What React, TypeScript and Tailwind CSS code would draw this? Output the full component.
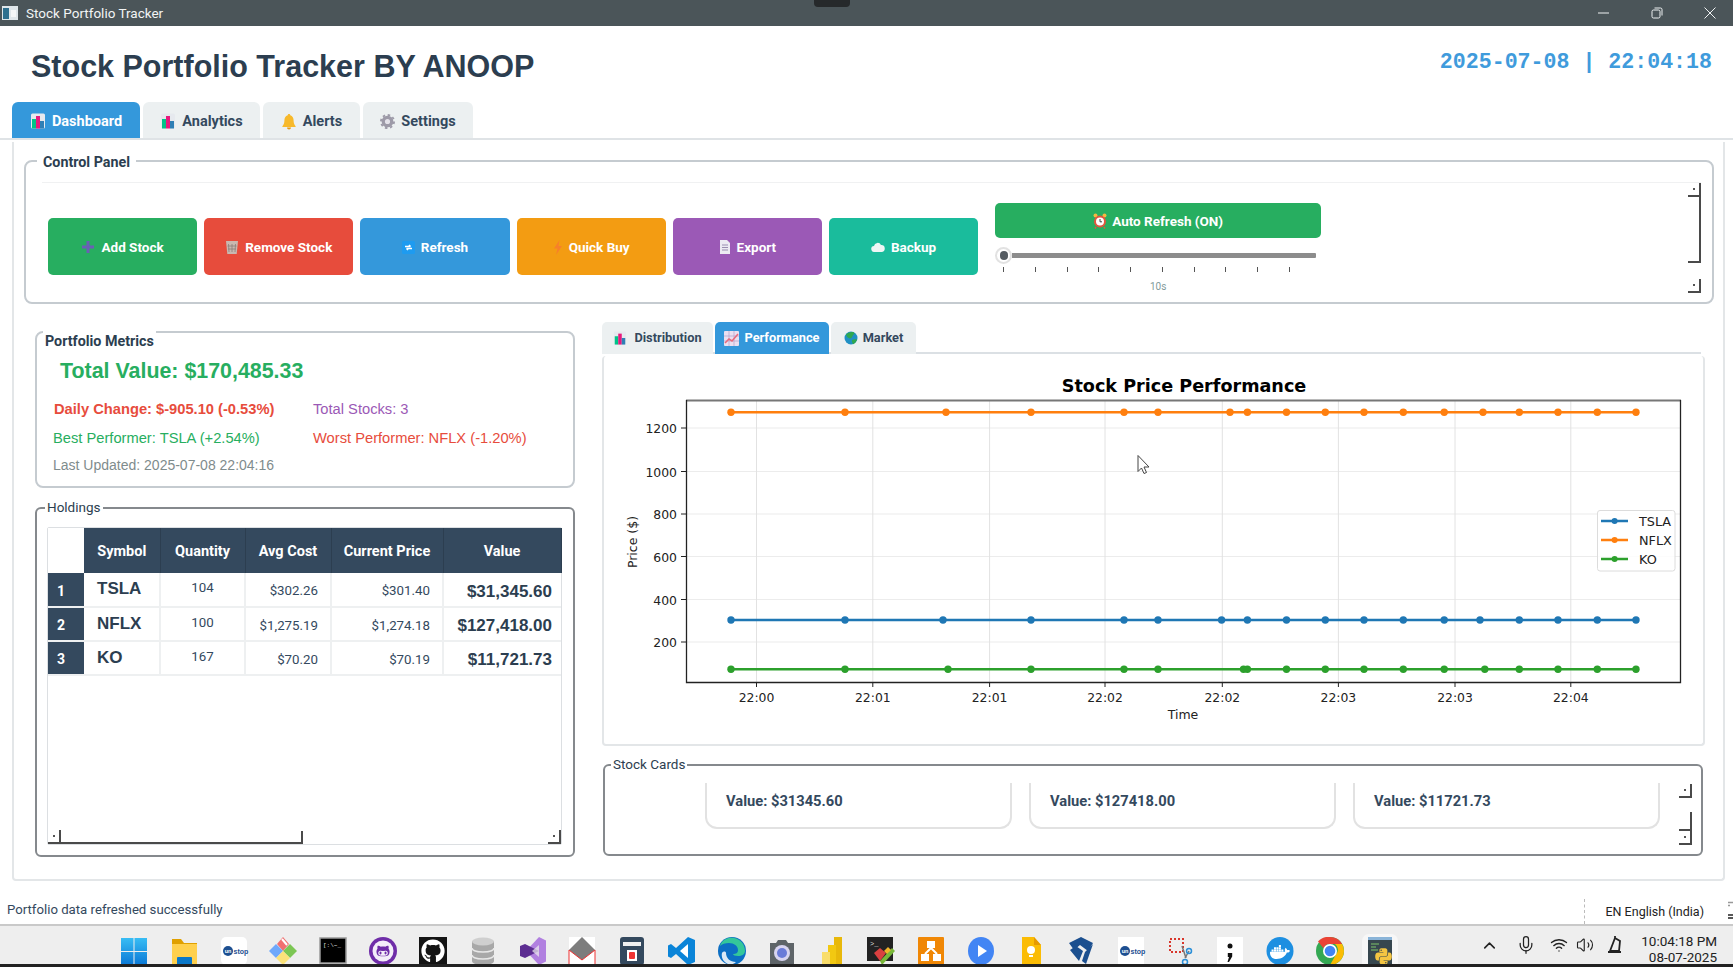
import React from "react";
import { FaGithub, FaGithubAlt, FaDocker, FaPython } from "react-icons/fa";
import { ChevronUp, Mic, Wifi, Volume2 } from "lucide-react";

const BarsIcon = ({ s = 16 }: { s?: number }) => (
  <svg width={s} height={s} viewBox="0 0 16 16" className="shrink-0">
    <rect x="1" y="0.5" width="14" height="15" rx="1.5" fill="#e6e9ee" />
    <rect x="2" y="6" width="4" height="9.5" fill="#00c389" />
    <rect x="6" y="3" width="4" height="12.5" fill="#e8197d" />
    <rect x="10" y="8" width="4" height="7.5" fill="#2f7fb5" />
  </svg>
);
const BellIcon = () => (
  <svg width="16" height="17" viewBox="0 0 16 17" className="shrink-0">
    <path d="M8 1c.8 0 1.2.5 1.3 1.2C11.6 3 12.6 5 12.6 7.5c0 2.6.7 4.3 2 5.7v.8H1.4v-.8c1.300-1.400 2-3.100 2-5.700C3.400 5 4.400 3 6.700 2.200 6.800 1.500 7.200 1 8 1z" fill="#f7b92b" />
    <path d="M6 14.500h4c0 1.200-.9 2-2 2s-2-.8-2-2z" fill="#e79a12" />
  </svg>
);
const GearIcon = () => (
  <svg width="15" height="15" viewBox="0 0 16 16" className="shrink-0">
    <circle cx="8" cy="8" r="4.500" fill="#e4e2ea" stroke="#9d9aa8" strokeWidth="3.500" />
    <circle cx="8" cy="8" r="7" fill="none" stroke="#9d9aa8" strokeWidth="2" strokeDasharray="2.700 2.800" />
  </svg>
);
const PlusIcon = () => (
  <svg width="14" height="14" viewBox="0 0 14 14" className="shrink-0">
    <path d="M7 1v12M1 7h12" stroke="#6a5fb5" strokeWidth="3" />
  </svg>
);
const TrashIcon = () => (
  <svg width="14" height="15" viewBox="0 0 14 15" className="shrink-0">
    <path d="M1 1h12l-1.300 13H2.300z" fill="#c9b8b0" />
    <path d="M3.500 4l.5 8M7 4v8M10.500 4l-.5 8M2.500 6h9M3 9h8" stroke="#8c7f7a" strokeWidth="0.8" />
  </svg>
);
const RefreshIcon = () => (
  <svg width="13" height="13" viewBox="0 0 13 13" className="shrink-0">
    <rect width="13" height="13" rx="1.500" fill="#1e9bf0" />
    <path d="M3 5.500h5.500M8.500 5.500L7 4M10 7.500H4.500M4.500 7.500L6 9" stroke="#fff" strokeWidth="1.500" fill="none" />
  </svg>
);
const BoltIcon = () => (
  <svg width="10" height="15" viewBox="0 0 10 15" className="shrink-0">
    <path d="M6.500 0L1 8.500h3.500L3 15l6-9H5.500z" fill="#f7802a" />
  </svg>
);
const PageIcon = () => (
  <svg width="12" height="14" viewBox="0 0 12 14" className="shrink-0">
    <path d="M1 0h7l3 3v11H1z" fill="#eceaf2" />
    <path d="M3 5h6M3 7.500h6M3 10h6" stroke="#9a8fb0" strokeWidth="1" />
  </svg>
);
const CloudIcon = () => (
  <svg width="14" height="10" viewBox="0 0 14 10" className="shrink-0">
    <path d="M3.500 10A3 3 0 0 1 3 4 3.700 3.700 0 0 1 10 3a3.500 3.500 0 0 1 .5 7z" fill="#eef6f5" />
  </svg>
);
const AlarmIcon = () => (
  <svg width="14" height="16" viewBox="0 0 14 16" className="shrink-0">
    <circle cx="2.500" cy="2.500" r="2" fill="#f5b740" />
    <circle cx="11.500" cy="2.500" r="2" fill="#f5b740" />
    <circle cx="7" cy="8.500" r="6" fill="#e2563f" />
    <circle cx="7" cy="8.500" r="4" fill="#fff" />
    <path d="M7 6v2.800h2" stroke="#444" strokeWidth="1" fill="none" />
    <path d="M3 14l-1 1.500M11 14l1 1.500" stroke="#e2563f" strokeWidth="1.500" />
  </svg>
);
const ChartUpIcon = () => (
  <svg width="15" height="15" viewBox="0 0 15 15" className="shrink-0">
    <rect width="15" height="15" rx="1" fill="#eadff0" />
    <path d="M0 5h15M0 10h15M5 0v15M10 0v15" stroke="#b9a7cf" strokeWidth="0.8" />
    <path d="M1 12l4-4 3 2 6-7" stroke="#e86a7c" strokeWidth="1.600" fill="none" />
  </svg>
);
const GlobeIcon = () => (
  <svg width="14" height="14" viewBox="0 0 14 14" className="shrink-0">
    <circle cx="7" cy="7" r="6.500" fill="#1f8fc4" />
    <path d="M2 3.500C4 1.500 8 .5 10 1.500c1 .8 0 2-1 2.500-.7 1.500-1 3-3 3.500C4 7 2.500 6 2 3.500zM8 9c1.500-1 3.500-1 5-.5-.5 2-2 4-4 4.700C8.500 12 7.500 10.500 8 9z" fill="#2fa84f" />
  </svg>
);

const GroupTitle = ({ children, cls }: { children: React.ReactNode; cls: string }) => (
  <div className={`absolute bg-white leading-[18px] text-[#2c3e50] ${cls}`}>{children}</div>
);

const ScrollBtn = ({ dir = "v" }: { dir?: string }) => (
  <div className={`flex items-center justify-center shrink-0 w-[13px] border-[#4a4a4a] ${dir === "l" ? "h-[12px] border-l-0 border-r-2 border-b-2" : "h-[14px] border-r-2 border-b-2"}`}>
    <div className="w-[2px] h-[2px] bg-[#555]" />
  </div>
);

const Btn = ({ color, icon, label }: { color: string; icon: React.ReactNode; label: string }) => (
  <div className={`w-[149.2px] h-[57px] rounded-[5px] flex items-center justify-center gap-[6px] text-white font-bold text-[13.500px] pt-px font-['Roboto',sans-serif] ${color}`}>
    {icon}
    <span>{label}</span>
  </div>
);

const rows = [
  ["1", "TSLA", "104", "$302.26", "$301.40", "$31,345.60"],
  ["2", "NFLX", "100", "$1,275.19", "$1,274.18", "$127,418.00"],
  ["3", "KO", "167", "$70.20", "$70.19", "$11,721.73"],
];

const common = [1247.4, 1286.5, 1325.3, 1364, 1403.3, 1444.2];
const tail = [1519.3, 1558, 1597.3, 1636];
const series = [
  { name: "NFLX", color: "#ff7f0e", y: 412.3, xs: [731, 845, 946, 1031, 1124, 1158, 1230, ...common, 1483, ...tail] },
  { name: "TSLA", color: "#1f77b4", y: 620, xs: [731, 845, 943, 1031, 1124, 1158, 1221.6, ...common, 1480, ...tail] },
  { name: "KO", color: "#2ca02c", y: 669.3, xs: [731, 845, 948, 1031, 1124, 1158, 1243.5, ...common, 1484.8, ...tail] },
];
const yTicks: [string, number][] = [["1200", 428], ["1000", 471.5], ["800", 514], ["600", 556.5], ["400", 599.5], ["200", 642]];
const xTicks: [string, number][] = [["22:00", 756.5], ["22:01", 872.8], ["22:01", 989.6], ["22:02", 1105], ["22:02", 1222.3], ["22:03", 1338.4], ["22:03", 1455], ["22:04", 1570.8]];

const Chart = () => (
  <svg width="1099" height="388" viewBox="604 356 1099 388" className="block font-['DejaVu_Sans',sans-serif]">
    <text x="1184" y="392" textAnchor="middle" fontSize="17.600" fontWeight="700" fill="#000">Stock Price Performance</text>
    {yTicks.map(([l, y]) => (
      <g key={l}>
        <line x1="686" x2="1681" y1={y} y2={y} stroke="#ececec" strokeWidth="1.200" />
        <line x1="681" x2="686" y1={y} y2={y} stroke="#222" />
        <text x="677" y={y + 5} textAnchor="end" fontSize="12.400" fill="#222">{l}</text>
      </g>
    ))}
    {xTicks.map(([l, x], i) => (
      <g key={i}>
        <line x1={x} x2={x} y1="400" y2="682" stroke="#e2e2e2" />
        <line x1={x} x2={x} y1="682" y2="687" stroke="#222" />
        <text x={x} y="702" textAnchor="middle" fontSize="12.400" fill="#222">{l}</text>
      </g>
    ))}
    {series.map((s) => (
      <g key={s.name}>
        <line x1="731" x2="1636" y1={s.y} y2={s.y} stroke={s.color} strokeWidth="2.600" />
        {s.xs.map((x, i) => <circle key={i} cx={x} cy={s.y} r="3.700" fill={s.color} />)}
      </g>
    ))}
    <path d="M686 400.500H1681" stroke="#777" strokeWidth="2" />
    <path d="M686.500 400V682.500H1680.500V400" stroke="#222" strokeWidth="1.300" fill="none" />
    <rect x="1597.500" y="510.500" width="77.500" height="60.500" rx="2.500" fill="#fff" fillOpacity="0.85" stroke="#dcdcdc" />
    {[["TSLA", "#1f77b4", 521], ["NFLX", "#ff7f0e", 540], ["KO", "#2ca02c", 559]].map(([n, c, y]) => (
      <g key={n as string}>
        <line x1="1601" x2="1628" y1={y as number} y2={y as number} stroke={c as string} strokeWidth="2.600" />
        <circle cx="1614.600" cy={y as number} r="3" fill={c as string} />
        <text x="1639" y={(y as number) + 4.500} fontSize="12.800" fill="#222">{n as string}</text>
      </g>
    ))}
    <text x="1183" y="719" textAnchor="middle" fontSize="12.500" fill="#222">Time</text>
    <text transform="translate(637 542) rotate(-90)" textAnchor="middle" fontSize="12.500" fill="#222">Price ($)</text>
    <path d="M1138 455.500v16l3.500-3.500 2.500 5.500 2.500-1-2.500-5.500h5z" fill="#fff" stroke="#444" strokeWidth="1" />
  </svg>
);

const T = ({ children }: { children: React.ReactNode }) => (
  <svg width="30" height="28" viewBox="0 0 30 28" className="block shrink-0">{children}</svg>
);

const UnstopMark = () => (
  <g>
    <circle cx="9" cy="14" r="5" fill="#1d4f91" />
    <text x="9" y="16" textAnchor="middle" fontSize="5.500" fontWeight="700" fill="#fff" fontFamily="Liberation Sans">un</text>
    <text x="14.500" y="16.500" fontSize="7" fontWeight="700" fill="#1d4f91" fontFamily="Liberation Sans">stop</text>
  </g>
);

const taskIcons: React.ReactNode[] = [
  <T><defs><linearGradient id="w" x1="0" y1="0" x2="0" y2="1"><stop offset="0" stopColor="#38bdf4" /><stop offset="1" stopColor="#0a78d6" /></linearGradient></defs><path d="M2 1h12.500v13H2zM15.500 1H28v13H15.500zM2 15h12.500v13H2zM15.500 15H28v13H15.500z" fill="url(#w)" /></T>,
  <T><path d="M3 2h9l3 4h13v22H3z" fill="#e0a000" /><path d="M3 7h25v21H3z" fill="#ffd04d" /><rect x="8" y="20" width="15" height="8" rx="1" fill="#0a78c9" /></T>,
  <T><rect x="2" width="26" height="28" rx="5" fill="#fff" /><UnstopMark /></T>,
  <T><path d="M15 0l6 7-6 7-6-7z" fill="#f07070" /><path d="M8 7l7 7-7 7-7-7z" fill="#6fa8fb" /><path d="M22 7l7 7-7 7-7-7z" fill="#7cc654" /><path d="M15 14l7 7-7 7-7-7z" fill="#fbe27a" /><path d="M14 2l5 6" stroke="#fff" strokeWidth="2" /></T>,
  <T><rect x="2" y="1" width="26" height="25" fill="#000" stroke="#999" strokeWidth="1.500" /><text x="5" y="10" fontSize="6" fill="#ddd" fontFamily="Liberation Mono">[:\~_</text></T>,
  <T><circle cx="15" cy="14" r="14" fill="#6f2da8" /><circle cx="15" cy="14" r="10.500" fill="#f4eef9" /><FaGithubAlt x="8" y="7" size="14" color="#6f2da8" /></T>,
  <T><rect x="1" width="28" height="28" fill="#141414" /><FaGithub x="3" y="2" size="24" color="#fff" /></T>,
  <T><path d="M4 4v20c0 2.500 5 4 11 4s11-1.500 11-4V4z" fill="#a8a8a8" /><ellipse cx="15" cy="4.500" rx="11" ry="4" fill="#cfcfcf" /><path d="M4 11c0 2.500 5 4 11 4s11-1.500 11-4M4 18c0 2.500 5 4 11 4s11-1.500 11-4" stroke="#e8e8e8" strokeWidth="1.500" fill="none" /></T>,
  <T><path d="M21 0l7 3.500v21L21 28 8 14z" fill="#b180e0" /><path d="M2 9l5-2 14 7v0L7 21l-5-2z" fill="#5c2d91" /><path d="M21 8v12l-7-6z" fill="#eee" opacity="0.700" /></T>,
  <T><rect x="2" width="26" height="28" fill="#fff" /><path d="M2 13L15 0l13 13-13 10z" fill="#7d7d7d" /><path d="M2 13l13 10 13-10M2 13v15M28 13v15" stroke="#e33" strokeWidth="1" fill="none" /></T>,
  <T><rect x="3" width="24" height="28" rx="3" fill="#34495e" /><rect x="6" y="5" width="18" height="4" fill="#f0f0f0" /><rect x="10" y="13" width="10" height="11" fill="#fff" /><rect x="12" y="15" width="6" height="7" rx="1" fill="#e33" /></T>,
  <T><path d="M21 0l7 3v22l-7 3L9 17l-5 4-3-1.500V8.500L4 7l5 4z" fill="#0a84d8" /><path d="M21 7v14l-8-7z" fill="#fff" /></T>,
  <T><circle cx="15" cy="14" r="14" fill="#0c6fc4" /><path d="M3 9c2-7 9-9 14-8 6 1 11 6 11 13 0 3-3 5-7 5-3 0-5-1-5-2 3 0 5-1 5-4 0-4-4-7-9-7-4 0-7 1-9 3z" fill="#34c79a" /><path d="M9 16c0 5 4 9 10 9-2 2-5 3-8 2-5-2-7-7-6-11 1-2 4-2 4 0z" fill="#fff" opacity="0.850" /></T>,
  <T><path d="M3 6h6l2-3h8l2 3h6v22H3z" fill="#5e6468" /><circle cx="15" cy="16" r="8" fill="#d8d4f0" /><circle cx="15" cy="16" r="5" fill="#6a7bd8" /></T>,
  <T><rect x="17" y="0" width="8" height="28" fill="#e8b80a" /><rect x="11" y="8" width="8" height="20" fill="#f2c811" /><rect x="5" y="15" width="8" height="13" fill="#f9dd6b" /></T>,
  <T><rect x="1" y="0" width="26" height="24" fill="#222" /><text x="4" y="9" fontSize="7" fill="#ddd" fontFamily="Liberation Mono">&gt;_</text><path d="M8 16l6 8 6-8-6-5z" fill="#d94040" /><path d="M14 24l12-13 3 3-13 14z" fill="#79b83a" /><path d="M18 14l4-4 3 3-4 4z" fill="#f0b429" /></T>,
  <T><rect x="2" width="26" height="28" rx="1" fill="#f08705" /><path d="M11 4h8v7h-8zM5 17h8v7H5zM17 17h8v7h-8z" fill="#fff" /><path d="M15 11l-6 6M15 11l6 6" stroke="#fff" strokeWidth="2" /></T>,
  <T><ellipse cx="15" cy="14" rx="13" ry="14" fill="#4285f4" /><path d="M12 8l9 6-9 6z" fill="#fff" /></T>,
  <T><path d="M6 0h12l7 8v20H6z" fill="#fbbc04" /><path d="M18 0v8h7z" fill="#e69a00" /><circle cx="15" cy="13" r="4" fill="#fff" /><rect x="13" y="18" width="4" height="2" fill="#fff" /></T>,
  <T><path d="M3 6L15 0l12 6-5 8-8-6-6 5zM4 13l6-4 7 5-4 10z" fill="#1b4f8f" /><path d="M19 15l8-8-7 20-4-3z" fill="#1b4f8f" /></T>,
  <T><rect x="2" width="26" height="28" fill="#fff" /><UnstopMark /></T>,
  <T><rect x="5" y="2" width="13" height="13" fill="none" stroke="#d9362b" strokeWidth="2" strokeDasharray="2 2" /><path d="M17 9l4 12" stroke="#777" strokeWidth="1.500" /><path d="M24 14l-4 7" stroke="#777" strokeWidth="1.500" /><circle cx="24" cy="14" r="2.500" fill="none" stroke="#2a8fd8" strokeWidth="1.500" /><circle cx="20" cy="25" r="2.500" fill="none" stroke="#2a8fd8" strokeWidth="1.500" /></T>,
  <T><rect x="2" width="26" height="28" fill="#fff" /><circle cx="15" cy="9" r="2.500" fill="#111" /><path d="M12.800 16h4.400v3.500L14 25h-1.500l1.500-5h-1.200z" fill="#111" /></T>,
  <T><ellipse cx="15" cy="14" rx="13.500" ry="14" fill="#1d8fe1" /><FaDocker x="5" y="5" size="20" color="#fff" /></T>,
  <T><circle cx="15" cy="14" r="14" fill="#34a853" /><path d="M15 0a14 14 0 0 1 12.100 7H15a7 7 0 0 0-6.500 4.300L3 4.500A14 14 0 0 1 15 0z" fill="#ea4335" /><path d="M27.100 7A14 14 0 0 1 15 28l6-10.500A7 7 0 0 0 20 7z" fill="#fbbc04" /><circle cx="15" cy="14" r="7" fill="#fff" /><circle cx="15" cy="14" r="5.300" fill="#4285f4" /></T>,
  <T><rect x="3" y="0" width="24" height="28" fill="#37474f" /><rect x="3" y="0" width="24" height="3" fill="#8ab4d8" /><path d="M6 7h8M6 10h5M6 13h7" stroke="#7fc66a" strokeWidth="1.200" /><FaPython x="9" y="10" size="19" color="#f4c542" /></T>,
];

export default function App() {
  return (
    <div className="w-[1733px] h-[967px] overflow-hidden flex flex-col bg-white font-['Liberation_Sans',sans-serif]">
      {/* Title bar */}
      <div className="h-[26px] shrink-0 bg-[#4b5559] flex items-center text-[#f2f4f4] text-[13.500px] font-['Roboto',sans-serif]">
        <svg width="16" height="14" viewBox="0 0 16 14" className="ml-[2px] mr-[8px]">
          <rect width="16" height="14" fill="#dfe6ea" />
          <rect x="1" y="2" width="6" height="11" fill="#2e6f8e" />
          <rect x="9" y="4" width="5" height="7" fill="#f4f6f7" />
        </svg>
        <span>Stock Portfolio Tracker</span>
        <div className="flex-1 flex justify-center self-start">
          <div className="w-[36px] h-[7px] bg-[#26292b] rounded-b-[4px] ml-[-98px]" />
        </div>
        <div className="flex items-center text-[#eef1f2]">
          <svg width="12" height="12" viewBox="0 0 12 12" className="mr-[41px]"><path d="M0 6h11" stroke="currentColor" strokeWidth="1" /></svg>
          <svg width="12" height="12" viewBox="0 0 12 12" className="mr-[41px]"><rect x="1" y="3" width="8" height="8" rx="1.500" fill="none" stroke="currentColor" /><path d="M3.500 1H9.500A1.500 1.500 0 0 1 11 2.500V8.500" fill="none" stroke="currentColor" /></svg>
          <svg width="12" height="12" viewBox="0 0 12 12" className="mr-[17px]"><path d="M0.500 0.500l11 11M11.500 0.500l-11 11" stroke="currentColor" strokeWidth="1" /></svg>
        </div>
      </div>

      {/* Header */}
      <div className="h-[76px] shrink-0 flex items-center justify-between pl-[31px] pr-[21px]">
        <h1 className="text-[30.500px] font-bold text-[#2c3e50] leading-none mt-[4px]">Stock Portfolio Tracker BY ANOOP</h1>
        <div className="text-[21.600px] font-bold text-[#3f9bdc] font-['Liberation_Mono',monospace] mt-[-3px]">2025-07-08 | 22:04:18</div>
      </div>

      {/* Tabs */}
      <div className="h-[38px] shrink-0 flex gap-[3px] pl-[12px] border-b-2 border-[#dfe3e6] items-start text-[14.500px] font-bold font-['Roboto',sans-serif]">
        <div className="w-[128px] h-[36px] rounded-t-[6px] bg-[#3498db] text-white flex items-center justify-center gap-[6px] pt-[2px]"><BarsIcon /><span className="pt-[2px]">Dashboard</span></div>
        <div className="w-[117px] h-[36px] rounded-t-[6px] bg-[#ecf0f1] text-[#34495e] flex items-center justify-center gap-[6px] pt-[2px]"><BarsIcon /><span className="pt-[2px]">Analytics</span></div>
        <div className="w-[97px] h-[36px] rounded-t-[6px] bg-[#ecf0f1] text-[#34495e] flex items-center justify-center gap-[6px] pt-[2px]"><BellIcon /><span className="pt-[2px]">Alerts</span></div>
        <div className="w-[110px] h-[36px] rounded-t-[6px] bg-[#ecf0f1] text-[#34495e] flex items-center justify-center gap-[6px] pt-[2px]"><GearIcon /><span className="pt-[2px]">Settings</span></div>
      </div>

      {/* Main pane */}
      <div className="h-[739px] shrink-0 ml-[12px] mr-[8px] mt-[2px] border-l-2 border-r-2 border-b-2 border-[#e3e6e8] rounded-b-[4px] overflow-hidden">
        {/* Control panel */}
        <div className="relative ml-[10px] mr-[9px] mt-[18px] h-[144px] border-2 border-[#c5cbd0] rounded-[8px]">
          <GroupTitle cls="left-[11px] top-[-9px] px-[6px] text-[14.300px] font-bold font-['Roboto',sans-serif]">Control Panel</GroupTitle>
          <div className="ml-[16px] mr-[11px] mt-[20px] h-[111px] border-t border-[#f0f1f2] flex">
            <div className="flex-1 flex items-start pl-[6px] pt-[20px]">
              <div className="flex gap-[7px] mt-[15px]">
                <Btn color="bg-[#27ae60]" icon={<PlusIcon />} label="Add Stock" />
                <Btn color="bg-[#e74c3c]" icon={<TrashIcon />} label="Remove Stock" />
                <Btn color="bg-[#3498db]" icon={<RefreshIcon />} label="Refresh" />
                <Btn color="bg-[#f39c12]" icon={<BoltIcon />} label="Quick Buy" />
                <Btn color="bg-[#9b59b6]" icon={<PageIcon />} label="Export" />
                <Btn color="bg-[#1abc9c]" icon={<CloudIcon />} label="Backup" />
              </div>
              <div className="w-[326px] ml-[17px] flex flex-col">
                <div className="h-[35px] rounded-[5px] bg-[#27ae60] text-white font-bold text-[13.500px] pt-px font-['Roboto',sans-serif] flex items-center justify-center gap-[5px]"><AlarmIcon />Auto Refresh (ON)</div>
                <div className="mt-[8px] h-[18px] flex items-center">
                  <div className="w-[17px] h-[17px] rounded-full bg-white border-2 border-[#e2e2e2] flex items-center justify-center shrink-0">
                    <div className="w-[8px] h-[9px] rounded-full bg-[#555c62]" />
                  </div>
                  <div className="flex-1 h-[5px] bg-[#8c8c8c] mr-[5px] rounded-r-[1px]" />
                </div>
                <div className="flex justify-between w-[287px] ml-[8px] mt-[2px] h-[6px] items-end">
                  {Array.from({ length: 10 }).map((_, i) => <div key={i} className="w-px h-[5px] bg-[#555]" />)}
                </div>
                <div className="text-center text-[10px] text-[#7f9a9a] mt-[9px] leading-[12px] font-['Roboto',sans-serif]">10s</div>
              </div>
            </div>
            <div className="w-[13px] flex flex-col shrink-0">
              <ScrollBtn />
              <div className="h-[66px] border-r-2 border-b-2 border-[#4a4a4a] shrink-0" />
              <div className="flex-1" />
              <ScrollBtn />
            </div>
          </div>
        </div>

        {/* Content row */}
        <div className="flex ml-[21px] mt-[18px] items-start">
          <div className="w-[540px] pt-[9px] flex flex-col gap-[19px] shrink-0">
            {/* Metrics */}
            <div className="relative h-[157px] border-2 border-[#c5cbd0] rounded-[8px]">
              <GroupTitle cls="left-[6px] top-[-2px] pl-[2px] pr-[2px] text-[14.300px] font-bold font-['Roboto',sans-serif] py-[1px]">Portfolio Metrics</GroupTitle>
              <div className="pl-[23px] mt-[23px] h-[30px] leading-[30px] text-[21.400px] font-bold text-[#27ae60]">Total Value: $170,485.33</div>
              <div className="grid grid-cols-[260px_1fr] pl-[16px] mt-[11px] text-[14.700px] leading-[24px] gap-y-[5px]">
                <div className="font-bold text-[#e74c3c] pl-px">Daily Change: $-905.10 (-0.53%)</div>
                <div className="text-[#9b59b6]">Total Stocks: 3</div>
                <div className="text-[#27ae60]">Best Performer: TSLA (+2.54%)</div>
                <div className="text-[#e74c3c]">Worst Performer: NFLX (-1.20%)</div>
              </div>
              <div className="pl-[16px] mt-[4px] h-[22px] leading-[22px] text-[14px] text-[#7f8c8d]">Last Updated: 2025-07-08 22:04:16</div>
            </div>

            {/* Holdings */}
            <div className="relative h-[350px] border-2 border-[#85898d] rounded-[6px]">
              <GroupTitle cls="left-[8px] top-[-11px] px-[2px] text-[13.500px] font-['Roboto',sans-serif]">Holdings</GroupTitle>
              <div className="ml-[10px] mt-[18px] w-[515px] h-[318px] border border-[#dcdfe2] rounded-[2px] flex flex-col justify-between font-['Roboto',sans-serif]">
                <table className="table-fixed w-[513px] border-collapse text-[#34495e]">
                  <colgroup>
                    <col className="w-[36px]" /><col className="w-[76px]" /><col className="w-[85px]" /><col className="w-[86px]" /><col className="w-[112px]" /><col className="w-[118px]" />
                  </colgroup>
                  <thead>
                    <tr className="h-[45px] text-white text-[14.500px] font-bold">
                      <th className="bg-white" />
                      {["Symbol", "Quantity", "Avg Cost", "Current Price", "Value"].map((h) => (
                        <th key={h} className="bg-[#34495e] border-r border-[#2c3e50] font-bold pt-[3px]">{h}</th>
                      ))}
                    </tr>
                  </thead>
                  <tbody>
                    {rows.map((r) => (
                      <tr key={r[0]} className="h-[34px] border-b-2 border-[#eef0f1]">
                        <td className="bg-[#34495e] text-white text-[14px] font-bold pl-[9px] pt-[3px]">{r[0]}</td>
                        <td className="pl-[13px] pb-[1px] text-[17px] font-bold text-[#2c3e50] border-r-2 border-[#eef0f1] font-['Liberation_Sans',sans-serif]">{r[1]}</td>
                        <td className="text-center pb-[3px] text-[13.300px] border-r-2 border-[#eef0f1]">{r[2]}</td>
                        <td className="text-right pr-[12px] pt-[3px] text-[13.300px] border-r-2 border-[#eef0f1]">{r[3]}</td>
                        <td className="text-right pr-[12px] pt-[3px] text-[13.300px] border-r-2 border-[#eef0f1]">{r[4]}</td>
                        <td className="text-right pr-[9px] pt-[4px] text-[17px] font-bold text-[#2c3e50] font-['Liberation_Sans',sans-serif]">{r[5]}</td>
                      </tr>
                    ))}
                  </tbody>
                </table>
                <div className="flex justify-between items-end h-[13px]">
                  <div className="flex items-end">
                    <ScrollBtn />
                    <div className="w-[242px] h-[13px] border-r-2 border-b-2 border-[#4a4a4a]" />
                  </div>
                  <ScrollBtn />
                </div>
              </div>
            </div>
          </div>

          {/* Right column */}
          <div className="w-[1103px] ml-[27px] shrink-0 flex flex-col">
            <div className="h-[32px] flex gap-[2px] items-start border-b-2 border-[#dbe0e4] text-[12.800px] font-bold font-['Roboto',sans-serif] mr-[4px]">
              <div className="w-[111px] h-[32px] bg-[#ecf0f1] rounded-t-[5px] text-[#34495e] flex items-center justify-center gap-[7px]"><BarsIcon s={14} />Distribution</div>
              <div className="w-[114px] h-[32px] bg-[#3498db] rounded-t-[5px] text-white flex items-center justify-center gap-[5px]"><ChartUpIcon />Performance</div>
              <div className="w-[85px] h-[32px] bg-[#ecf0f1] rounded-t-[5px] text-[#34495e] flex items-center justify-center gap-[5px]"><GlobeIcon />Market</div>
            </div>
            <div className="mt-[2px] h-[390px] border-l-2 border-r-2 border-b-2 border-[#e3e6e8] rounded-[4px] overflow-hidden">
              <Chart />
            </div>
            {/* Stock cards */}
            <div className="relative ml-[1px] w-[1100px] h-[92px] mt-[18px] border-2 border-[#85898d] rounded-[6px] flex">
              <GroupTitle cls="left-[6px] top-[-11px] px-[2px] text-[13.500px] font-['Roboto',sans-serif]">Stock Cards</GroupTitle>
              <div className="flex-1 flex gap-[17px] pl-[100px] pt-[17px] items-start">
                {["Value: $31345.60", "Value: $127418.00", "Value: $11721.73"].map((v) => (
                  <div key={v} className="w-[307px] h-[46px] border-2 border-t-0 border-[#e2e2e2] rounded-b-[12px] pl-[19px] pt-[8px] text-[14.700px] leading-[20px] font-bold text-[#34495e] font-['Roboto',sans-serif]">{v}</div>
                ))}
              </div>
              <div className="w-[13px] mr-[9px] flex flex-col shrink-0 pt-[18px]">
                <ScrollBtn />
                <div className="h-[19px] mt-[14px] border-r-2 border-b-2 border-[#4a4a4a]" />
                <ScrollBtn />
              </div>
            </div>
          </div>
        </div>
      </div>

      {/* Status bar */}
      <div className="h-[43px] shrink-0 flex items-center justify-between pl-[7px] font-['Roboto',sans-serif]">
        <span className="text-[13.200px] text-[#34495e] pt-[14px]">Portfolio data refreshed successfully</span>
        <div className="flex items-end self-stretch">
          <div className="h-[25px] border-l border-dashed border-[#bbb] mr-[21px]" />
          <span className="text-[12.500px] text-[#222] leading-[24px] mr-[24px]">EN English (India)</span>
          <svg width="5" height="20" viewBox="0 0 5 20" className="mb-[4px]">
            <path d="M0 2.500h5M0 5.500h2" stroke="#999" strokeWidth="1.500" />
            <path d="M0 15h5M0 18h5" stroke="#222" strokeWidth="1.500" />
          </svg>
        </div>
      </div>

      {/* Taskbar */}
      <div className="flex-1 bg-[#eeeeee] border-t-2 border-[#c9c9c9] border-b-[3px] border-b-[#222] flex items-end justify-between overflow-hidden">
        <div className="flex items-end ml-[119px] gap-[19.830px]">
          {taskIcons.map((ic, i) => (
            <div key={i} className={`h-[27px] ${i === taskIcons.length - 1 ? "bg-[#f7f7f7] rounded-t-[4px] shadow-[0_0_0_3px_#f7f7f7]" : ""}`}>{ic}</div>
          ))}
        </div>
        <div className="flex items-center mr-[16px] h-[38px] text-[#222]">
          <ChevronUp size={19} strokeWidth={2} className="mr-[17px]" />
          <Mic size={20} strokeWidth={1.5} className="mr-[14px]" />
          <Wifi size={18} strokeWidth={1.800} className="mr-[8px]" />
          <Volume2 size={18} strokeWidth={1.500} className="mr-[12px]" />
          <svg width="18" height="20" viewBox="0 0 18 20" className="mr-[17px]"><path d="M4 16L9 3l5 3-1 10zM9 1v3M2 17h13" stroke="#222" strokeWidth="1.800" fill="none" /></svg>
          <div className="text-[13.500px] leading-[16px] text-right font-['Roboto',sans-serif] mt-[8px]">
            <div>10:04:18 PM</div>
            <div>08-07-2025</div>
          </div>
        </div>
      </div>
    </div>
  );
}
